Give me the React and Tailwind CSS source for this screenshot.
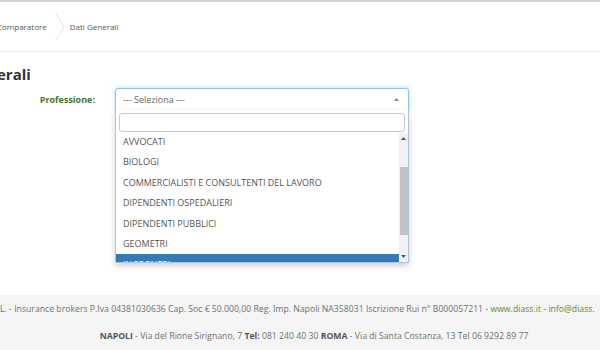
import React from "react";

const professioni = [
  "AVVOCATI",
  "BIOLOGI",
  "COMMERCIALISTI E CONSULTENTI DEL LAVORO",
  "DIPENDENTI OSPEDALIERI",
  "DIPENDENTI PUBBLICI",
  "GEOMETRI",
];

function Breadcrumb() {
  return (
    <div className="h-[50px] flex items-center border-b border-[#ececec] text-[8px] text-[#555]">
      <span className="-ml-[3px]">Comparatore</span>
      <svg width="10" height="28" viewBox="0 0 10 28" className="ml-[8px] mr-[5px]">
        <polyline points="1,1 9,14 1,27" fill="none" stroke="#e2e2e2" strokeWidth="1" />
      </svg>
      <span>Dati Generali</span>
    </div>
  );
}

function SelectOpen() {
  return (
    <div className="w-[294px] relative">
      <div className="h-[23px] border border-[#8fc1ec] rounded-t-[3px] flex items-center justify-between pl-[7px] pr-[9px] shadow-[0_0_4px_rgba(102,175,233,0.5)] bg-white">
        <span className="text-[9px] text-[#666]">--- Seleziona ---</span>
        <svg width="5" height="3" viewBox="0 0 5 3">
          <polygon points="0,3 2.5,0 5,3" fill="#888" />
        </svg>
      </div>
      <div className="absolute left-0 top-[22px] w-[294px] bg-white border border-[#a9c8e6] border-t-0 shadow-[0_3px_6px_rgba(0,0,0,0.18)]">
        <div className="px-[3px] pt-[3px] pb-[1px]">
          <div className="h-[19px] border border-[#c8c8c8] rounded-[3px]" />
        </div>
        <div className="flex h-[129px]">
          <div className="flex-1 overflow-hidden">
            <div className="-mt-[2px]">
              {professioni.map((p) => (
                <div key={p} className="h-[20.5px] flex items-center pl-[7px] text-[9px] text-[#555]">
                  {p}
                </div>
              ))}
              <div className="h-[20.5px] flex items-center pl-[7px] text-[9px] text-white bg-[#337ab7]">
                INGEGNERI
              </div>
            </div>
          </div>
          <div className="w-[9px] bg-[#f1f1f1] flex flex-col items-center">
            <svg width="5" height="3" viewBox="0 0 5 3" className="mt-[4px]">
              <polygon points="0,3 2.5,0 5,3" fill="#555" />
            </svg>
            <div className="w-[8px] h-[68px] bg-[#c1c1c1] mt-[27px]" />
            <div className="flex-1" />
            <svg width="5" height="3" viewBox="0 0 5 3" className="mb-[4px]">
              <polygon points="0,0 2.5,3 5,0" fill="#555" />
            </svg>
          </div>
        </div>
      </div>
    </div>
  );
}

export default function App() {
  return (
    <div
      className="w-[600px] h-[350px] bg-white overflow-hidden flex flex-col border-t-2 border-[#d4d4d4]"
      style={{ fontFamily: '"Open Sans", "Liberation Sans", sans-serif' }}
    >
      <Breadcrumb />
      <div className="h-[243px] relative">
        <h1 className="text-[15px] font-bold text-[#333] -ml-[3px] mt-[12px] leading-[20px]">erali</h1>
        <div className="flex items-start mt-[4px]">
          <div className="w-[115px] pr-[20px] text-right text-[9px] font-bold text-[#467332] leading-[23px]">
            Professione:
          </div>
          <SelectOpen />
        </div>
      </div>
      <div className="flex-1 bg-[#f5f5f5] text-[8.7px] text-[#707070] flex flex-col items-center pt-[8px]">
        <div className="whitespace-nowrap w-[600px] leading-[12px]">
          L. - Insurance brokers P.Iva 04381030636 Cap. Soc € 50.000,00 Reg. Imp. Napoli NA358031 Iscrizione Rui n° B000057211 -{" "}
          <span className="text-[#5b8a2e]">www.diass.it</span> -{" "}
          <span className="text-[#5b8a2e]">info@diass.</span>
        </div>
        <div className="whitespace-nowrap leading-[12px] mt-[15px] ml-[28px]">
          <b className="text-[#555]">NAPOLI</b> - Via del Rione Sirignano, 7 <b className="text-[#555]">Tel:</b> 081 240 40 30{" "}
          <b className="text-[#555]">ROMA</b> - Via di Santa Costanza, 13 Tel 06 9292 89 77
        </div>
      </div>
    </div>
  );
}
